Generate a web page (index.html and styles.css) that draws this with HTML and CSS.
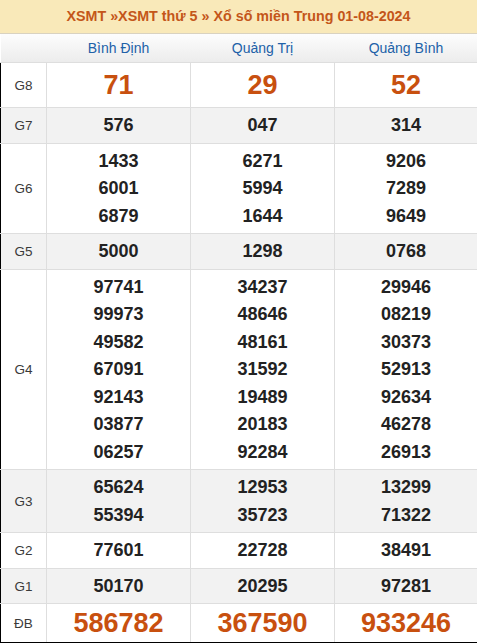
FILE: index.html
```html
<!DOCTYPE html>
<html lang="vi">
<head>
<meta charset="utf-8">
<link rel="stylesheet" href="styles.css">
</head>
<body>
<div class="box">
  <div class="title">XSMT »XSMT thứ 5 » Xổ số miền Trung 01-08-2024</div>
  <table class="kq">
    <colgroup><col class="c0"><col class="c1"><col class="c2"><col class="c3"></colgroup>
    <thead>
      <tr><th></th><th>Bình Định</th><th>Quảng Trị</th><th>Quảng Bình</th></tr>
    </thead>
    <tbody>
      <tr class="g8"><td class="lb">G8</td><td class="big">71</td><td class="big">29</td><td class="big">52</td></tr>
      <tr class="alt"><td class="lb">G7</td><td>576</td><td>047</td><td>314</td></tr>
      <tr><td class="lb">G6</td><td>1433<br>6001<br>6879</td><td>6271<br>5994<br>1644</td><td>9206<br>7289<br>9649</td></tr>
      <tr class="alt"><td class="lb">G5</td><td>5000</td><td>1298</td><td>0768</td></tr>
      <tr><td class="lb">G4</td><td>97741<br>99973<br>49582<br>67091<br>92143<br>03877<br>06257</td><td>34237<br>48646<br>48161<br>31592<br>19489<br>20183<br>92284</td><td>29946<br>08219<br>30373<br>52913<br>92634<br>46278<br>26913</td></tr>
      <tr class="alt"><td class="lb">G3</td><td>65624<br>55394</td><td>12953<br>35723</td><td>13299<br>71322</td></tr>
      <tr><td class="lb">G2</td><td>77601</td><td>22728</td><td>38491</td></tr>
      <tr class="alt"><td class="lb">G1</td><td>50170</td><td>20295</td><td>97281</td></tr>
      <tr class="db"><td class="lb">ĐB</td><td class="big">586782</td><td class="big">367590</td><td class="big">933246</td></tr>
    </tbody>
  </table>
</div>
</body>
</html>
```
FILE: styles.css
```css
html, body {
  margin: 0;
  padding: 0;
  background: #fff;
}
body {
  font-family: "Liberation Sans", Arial, sans-serif;
  width: 477px;
}
.box {
  width: 477px;
}
.title {
  background: #f9e9b9;
  border-bottom: 1px solid #d9d2c0;
  color: #c4561a;
  font-weight: bold;
  font-size: 14.3px;
  line-height: 33px;
  text-align: center;
  box-sizing: border-box;
  height: 34px;
}
.kq {
  width: 477px;
  border-collapse: collapse;
  table-layout: fixed;
}
.c0 { width: 46px; }
.c1 { width: 144px; }
.c2 { width: 144px; }
.c3 { width: 143px; }
.kq th {
  height: 28px;
  padding: 0;
  font-weight: normal;
  font-size: 14px;
  color: #2161a8;
  background: linear-gradient(#fdfdfd, #ececec);
  border-bottom: 1px solid #dedede;
  text-align: center;
}
.kq tbody td {
  border: 1px solid #dedede;
  padding: 4px 0 3px;
  text-align: center;
  font-weight: bold;
  font-size: 18px;
  line-height: 27.5px;
  color: #222;
}
.kq tbody td:first-child {
  border-left: 1px solid #000;
}
.kq tbody td:last-child {
  border-right: 1px solid #000;
}
.kq tbody tr:last-child td {
  border-bottom: 1px solid #000;
}
.kq tbody td.lb {
  font-weight: normal;
  font-size: 13.5px;
  color: #3a3a3a;
}
.alt td {
  background: #f2f2f2;
}
.kq tbody td.big {
  color: #c8500f;
  font-size: 27px;
}
.g8 td {
  height: 37px;
  padding: 4px 0;
}
.g8 td.big {
  line-height: 37px;
}
.db td {
  height: 31px;
  padding: 4px 0 3px;
}
.db td.big {
  line-height: 31px;
}
```
